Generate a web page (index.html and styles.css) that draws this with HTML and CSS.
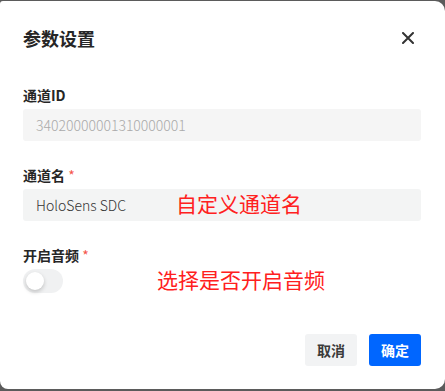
FILE: index.html
```html
<!DOCTYPE html>
<html lang="zh-CN">
<head>
  <meta charset="UTF-8" />
  <meta name="viewport" content="width=device-width, initial-scale=1.0" />
  <title>参数设置</title>
  <link rel="stylesheet" href="styles.css">
</head>
<body>

  <!-- DIALOG -->
  <div class="dialog">
    <div class="dialog-header">
      <span class="dialog-title">参数设置</span>
      <span class="dialog-close">
        <svg width="12" height="12" viewBox="0 0 12 12">
          <path d="M1 1 L11 11 M11 1 L1 11" stroke="#333" stroke-width="2" stroke-linecap="round" />
        </svg>
      </span>
    </div>

    <div class="dialog-body">
      <div class="field">
        <div class="label">通道ID</div>
        <div class="input disabled">34020000001310000001</div>
      </div>

      <div class="field">
        <div class="label">通道名 <span class="req">*</span></div>
        <div class="input">HoloSens SDC</div>
        <span class="note note-name">自定义通道名</span>
      </div>

      <div class="field">
        <div class="label">开启音频 <span class="req">*</span></div>
        <div class="switch"><div class="knob"></div></div>
        <span class="note note-audio">选择是否开启音频</span>
      </div>
    </div>

    <div class="dialog-footer">
      <button class="btn btn-cancel">取消</button>
      <button class="btn btn-ok">确定</button>
    </div>
  </div>

</body>
</html>
```

FILE: styles.css
```css
* {
  box-sizing: border-box;
  margin: 0;
  padding: 0;
}

body {
  font-family: 'Noto Sans CJK SC', 'Noto Sans', sans-serif;
  background: #5b5b5b;
  color: #333;
  width: 445px;
  height: 391px;
  overflow: hidden;
}

/* --- DIALOG --- */
.dialog {
  background: #fff;
  margin: 1px 0 0 0;
  height: 388px;
  border-radius: 3px 10px 10px 8px;
  display: flex;
  flex-direction: column;
}

.dialog-header {
  display: flex;
  justify-content: space-between;
  align-items: center;
  padding: 23px 31px 0 23px;
  height: 51px;
}

.dialog-title {
  font-size: 18px;
  font-weight: bold;
  line-height: 28px;
  color: #262626;
}

.dialog-close {
  display: flex;
  width: 12px;
  height: 12px;
}

.dialog-body {
  padding: 32px 24px 0 23px;
}

.field {
  position: relative;
  margin-bottom: 23px;
}

.label {
  font-size: 14px;
  font-weight: bold;
  line-height: 22px;
  color: #262626;
  margin-bottom: 3px;
}

.req {
  color: #f5554a;
  font-weight: normal;
}

.input {
  height: 32px;
  border-radius: 3px;
  background: #f3f4f4;
  padding: 0 13px;
  font-size: 14px;
  font-weight: 300;
  line-height: 32px;
  color: #333;
}

.input.disabled {
  background: #f5f5f5;
  color: #aaa;
}

.switch {
  width: 40px;
  height: 24px;
  border-radius: 12px;
  background: #f0f1f2;
  padding: 3px;
}

.knob {
  width: 18px;
  height: 18px;
  border-radius: 50%;
  background: #fff;
  box-shadow: 0 2px 4px rgba(0, 0, 0, 0.2);
}

/* annotations drawn over the screenshot */
.note {
  position: absolute;
  font-size: 21px;
  line-height: 28px;
  color: #ff2020;
}

.note-name {
  left: 153px;
  top: 25px;
}

.note-audio {
  left: 134px;
  top: 21px;
}

.dialog-footer {
  margin-top: auto;
  display: flex;
  justify-content: flex-end;
  gap: 12px;
  padding: 0 24px 23px 0;
}

.btn {
  width: 52px;
  height: 32px;
  border: none;
  border-radius: 3px;
  font-family: 'Noto Sans CJK SC', sans-serif;
  font-size: 14px;
  font-weight: bold;
}

.btn-cancel {
  background: #f2f3f4;
  color: #3a3a3a;
}

.btn-ok {
  background: #0066ff;
  color: #fff;
}
```
